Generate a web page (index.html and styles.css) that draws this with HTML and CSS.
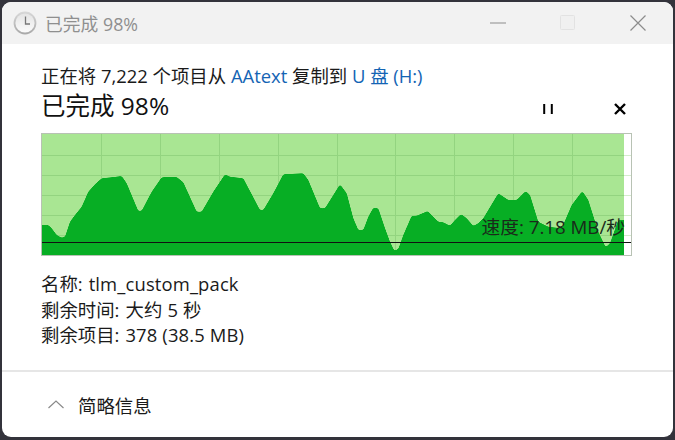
FILE: index.html
```html
<!DOCTYPE html>
<html lang="zh-CN">
<head>
<meta charset="utf-8">
<title>已完成 98%</title>
<link rel="stylesheet" href="styles.css">
</head>
<body>
<main class="window">
  <header class="titlebar">
    <svg class="clock" width="24" height="24" viewBox="0 0 24 24">
      <defs>
        <linearGradient id="rim" x1="0" y1="0" x2="0" y2="1"><stop offset="0" stop-color="#d8d8d8"/><stop offset="1" stop-color="#a8a8a8"/></linearGradient>
        <linearGradient id="face" x1="0" y1="0" x2="0" y2="1"><stop offset="0" stop-color="#e4e4e4"/><stop offset="1" stop-color="#fbfbfb"/></linearGradient>
      </defs>
      <circle cx="12" cy="12" r="11.4" fill="url(#rim)"/>
      <circle cx="12" cy="12" r="9.6" fill="url(#face)"/>
      <path d="M12.5 5.5V13H17" fill="none" stroke="#777" stroke-width="1.3"/>
    </svg>
    <span class="title">已完成 98%</span>
    <div class="controls">
      <svg width="16" height="16" viewBox="0 0 16 16" class="ctl"><path d="M0 8H16" stroke="#8c8c8c" stroke-width="1"/></svg>
      <svg width="16" height="16" viewBox="0 0 16 16" class="ctl"><rect x=".5" y=".5" width="14" height="14" rx="1" fill="#f0f0f0" stroke="#e2e2e2"/></svg>
      <svg width="16" height="16" viewBox="0 0 16 16" class="ctl"><path d="M.5 .5L15.5 15.5M15.5 .5L.5 15.5" stroke="#8c8c8c" stroke-width="1.2" fill="none"/></svg>
    </div>
  </header>

  <section class="body">
    <p class="line">正在将 7,222 个项目从 <span class="link">AAtext</span> 复制到 <span class="link">U 盘 (H:)</span></p>
    <div class="head-row">
      <h1 class="percent">已完成 98%</h1>
      <div class="actions">
        <svg width="12" height="12" viewBox="0 0 12 12"><path d="M2.2 1V11M9.8 1V11" stroke="#000" stroke-width="2" fill="none"/></svg>
        <svg width="14" height="14" viewBox="0 0 14 14"><path d="M2 2L12 12M12 2L2 12" stroke="#000" stroke-width="2.4" fill="none"/></svg>
      </div>
    </div>

    <div class="chart">
      <svg width="589" height="121" viewBox="42 134 589 121" class="chart-svg">
        <defs>
          <clipPath id="plot"><rect x="42" y="134" width="582" height="121"/></clipPath>
          <filter id="soften" x="-5%" y="-20%" width="110%" height="140%" color-interpolation-filters="sRGB">
            <feGaussianBlur stdDeviation="1.3"/>
            <feComponentTransfer><feFuncA type="linear" slope="5" intercept="-2"/></feComponentTransfer>
          </filter>
        </defs>
        <rect x="42" y="134" width="582" height="121" fill="#a9e693"/>
        <path d="M101.5 134V255M160.5 134V255M219.5 134V255M278.5 134V255M337.5 134V255M395.5 134V255M454.5 134V255M513.5 134V255M572.5 134V255M42 155.5H631M42 175.5H631M42 195.5H631M42 215.5H631M42 235.5H631" stroke="#93d480" stroke-width="1" fill="none"/>
        <rect x="624" y="134" width="7" height="121" fill="#fff" opacity=".6"/>
        <g clip-path="url(#plot)">
          <path class="area" filter="url(#soften)" d="M32 265V225L48.3 225 51.7 228.3 56.7 235 61.7 237.7 65 236.7 70 221.7 75 215 81.7 206.7 88.3 191.7 95 184.3 101.7 178.3 111.7 177.3 121.7 176 126.7 183.3 138.3 211 141.7 210.7 151.7 191.7 161.7 177.3 176.7 177 183.3 182.3 196.7 211.7 201.7 211.7 213.3 191.7 225 174.3 230 176.7 243.3 178.3 260 210 263.3 210 273.3 193.3 283.3 174.3 303.3 173.3 308.3 180 320 208.3 325 208.3 340 184.3 346.7 193.3 353.3 218.3 358.3 230 363.3 230 368.3 216.7 373.3 207.7 378.3 208.3 385 228.3 390 241.7 394.3 250.7 398.3 249 403.3 235 411.7 215.7 416.7 215.7 427.7 211 438.3 221.7 443.3 222.3 450 225.7 455 220 461 214 466.7 218.3 473.3 226 478.3 223.3 483.3 218.3 498.3 193.3 508.3 200 516.7 200 525.7 191 530 195 538.3 221.7 548.3 226.7 561.7 228.3 571.7 205 582.3 191 588.3 200 598.3 231.7 605.7 247.3 610 243.3 618.3 220 640 220V265Z"/>
        </g>
        <path d="M42 242.5H631" stroke="#111" stroke-width="1"/>
      </svg>
      <span class="speed">速度: 7.18 MB/秒</span>
    </div>

    <ul class="info">
      <li><span>名称:</span><span class="value">tlm_custom_pack</span></li>
      <li><span>剩余时间:</span><span class="value">大约 5 秒</span></li>
      <li><span>剩余项目:</span><span class="value">378 (38.5 MB)</span></li>
    </ul>
  </section>

  <footer class="footer">
    <svg width="16" height="9" viewBox="0 0 16 9"><path d="M.5 8L8 1L15.5 8" fill="none" stroke="#8a8a8a" stroke-width="1.2"/></svg>
    <span>简略信息</span>
  </footer>
</main>
</body>
</html>
```
FILE: styles.css
```css
* { box-sizing: border-box; margin: 0; padding: 0; }
html, body { width: 675px; height: 440px; overflow: hidden; background: #33333b; }
body {
  padding: 2px 2px 3px 2px;
  font-family: "Open Sans", "Noto Sans CJK SC", sans-serif;
  font-size: 18.4px;
  color: #1a1a1a;
}
.window {
  width: 671px;
  height: 435px;
  background: #fff;
  border-radius: 9px;
  overflow: hidden;
  display: flex;
  flex-direction: column;
}
.titlebar {
  height: 42px;
  flex: none;
  background: #f2f2f2;
  display: flex;
  align-items: center;
  padding-left: 11px;
}
.clock { flex: none; }
.title { margin-left: 8px; color: #8f8f8f; font-size: 17.8px; }
.controls {
  margin-left: auto;
  display: flex;
  gap: 54px;
  padding-right: 27px;
}
.ctl { display: block; }
.body {
  flex: 1;
  padding: 19px 41px 0 39px;
}
.line { height: 25px; line-height: 25px; white-space: nowrap; }
.link { color: #1464b4; }
.head-row {
  height: 36px;
  display: flex;
  align-items: center;
  justify-content: space-between;
}
.percent { font-size: 24.5px; font-weight: 400; color: #111; line-height: 32px; }
.actions {
  display: flex;
  align-items: center;
  gap: 59px;
  padding-top: 6px;
  padding-right: 5px;
}
.actions svg { display: block; }
.chart {
  position: relative;
  margin-top: 9px;
  width: 591px;
  height: 123px;
  border: 1px solid #b8c2b4;
  background: #fff;
}
.chart-svg { display: block; }
.area { fill: #07ae24; }
.speed {
  position: absolute;
  right: 6px;
  top: 80px;
  font-size: 18.7px;
  line-height: 26px;
  color: #1a2a1a;
  white-space: nowrap;
}
.info { list-style: none; margin-top: 15px; }
.info li {
  height: 25.5px;
  line-height: 25.5px;
  white-space: nowrap;
  display: flex;
  gap: 6px;
}
.value { letter-spacing: .15px; }
.footer {
  height: 67px;
  flex: none;
  border-top: 2px solid #e6e6e6;
  display: flex;
  align-items: center;
  gap: 14px;
  padding-left: 46px;
}
.footer svg { display: block; }
```
